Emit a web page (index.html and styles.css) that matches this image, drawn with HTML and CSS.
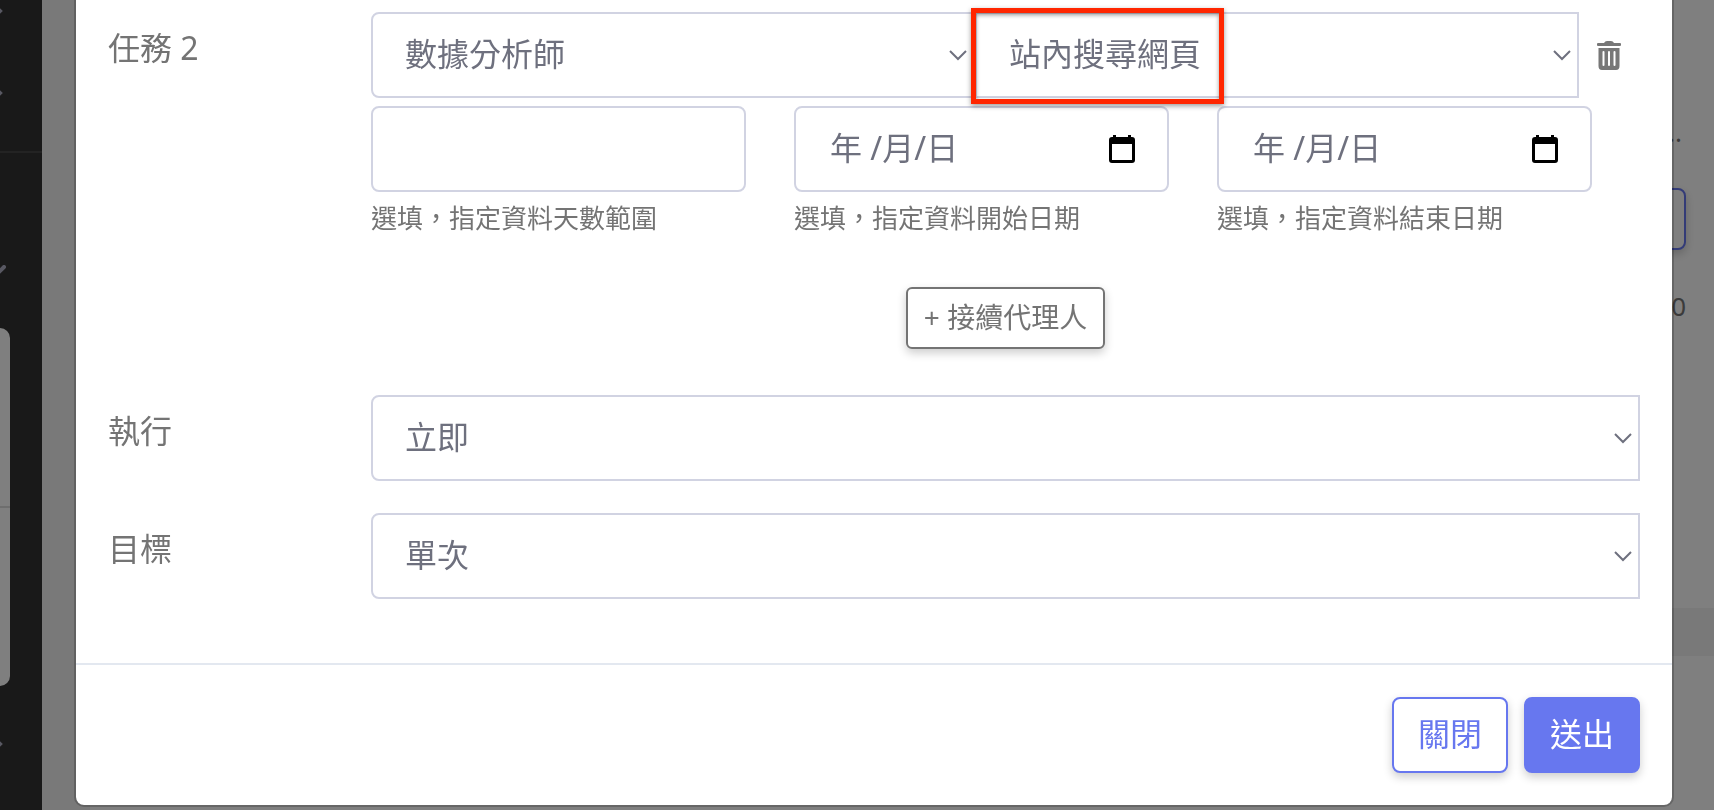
FILE: index.html
```html
<!DOCTYPE html>
<html lang="zh-Hant">
<head>
    <meta charset="UTF-8">
    <meta name="viewport" content="width=device-width, initial-scale=1.0">
    <title>任務</title>
    <link rel="stylesheet" href="styles.css">
</head>
<body>
    <div class="app">
        <nav class="sidebar">
            <div class="sidebar-links">
                <svg class="caret" viewBox="0 0 8 12"><path d="M-6 0L0 6L-6 12"/></svg>
                <svg class="caret" viewBox="0 0 8 12"><path d="M-6 0L0 6L-6 12"/></svg>
            </div>
            <div class="sidebar-open">
                <svg class="caret" viewBox="0 0 8 12"><path d="M-10 2L-3 9L4 2"/></svg>
            </div>
            <div class="submenu">
                <div class="submenu-group"></div>
            </div>
            <div class="sidebar-more">
                <svg class="caret" viewBox="0 0 8 12"><path d="M-6 0L0 6L-6 12"/></svg>
            </div>
        </nav>
        <main class="content">
            <section class="card">
                <p class="card-text">...</p>
                <button type="button" class="card-btn" aria-label="more"></button>
                <p class="card-count">0</p>
            </section>
            <section class="card card-next"></section>
        </main>
    </div>

    <div class="backdrop">
        <div class="modal" role="dialog">
            <form id="taskForm">
                <div class="modal-body">
                    <div class="form-row">
                        <label class="row-label" for="agent">任務 2</label>
                        <div class="row-fields">
                            <div class="task-line">
                                <div class="select-group">
                                    <select class="field select" id="agent">
                                        <option>數據分析師</option>
                                    </select>
                                    <div class="marked">
                                        <select class="field select select-square" id="skill" aria-label="技能">
                                            <option>站內搜尋網頁</option>
                                        </select>
                                        <div class="highlight"></div>
                                    </div>
                                </div>
                                <button type="button" class="trash-btn" aria-label="刪除">
                                    <svg viewBox="0 0 24 29" width="24" height="29">
                                        <path fill="#777" fill-rule="evenodd" d="M1 2H7Q8 0 10 0H14Q16 0 17 2H23Q24 2 24 3V4Q24 5 23 5H1Q0 5 0 4V3Q0 2 1 2ZM1.500 7H22.500V25Q22.500 29 19 29H5Q1.500 29 1.500 25ZM5.500 11V24Q5.500 25 6.500 25Q7.500 25 7.500 24V11Q7.500 10 6.500 10Q5.500 10 5.500 11ZM11 11V24Q11 25 12 25Q13 25 13 24V11Q13 10 12 10Q11 10 11 11ZM16.500 11V24Q16.500 25 17.500 25Q18.500 25 18.500 24V11Q18.500 10 17.500 10Q16.500 10 16.500 11Z"/>
                                    </svg>
                                </button>
                            </div>
                            <div class="range-line">
                                <div>
                                    <input class="field" type="text" id="days">
                                    <label class="help" for="days">選填，指定資料天數範圍</label>
                                </div>
                                <div>
                                    <div class="field date-field">
                                        <input type="text" id="startDate" placeholder="年 /月/日">
                                        <button type="button" class="date-btn" aria-label="選擇日期">
                                            <svg viewBox="0 0 26 28" width="26" height="28"><path fill-rule="evenodd" d="M4 0H7V2H19V0H22V2H23Q26 2 26 5V25Q26 28 23 28H3Q0 28 0 25V5Q0 2 3 2H4ZM3 9V25H23V9Z"/></svg>
                                        </button>
                                    </div>
                                    <label class="help" for="startDate">選填，指定資料開始日期</label>
                                </div>
                                <div>
                                    <div class="field date-field">
                                        <input type="text" id="endDate" placeholder="年 /月/日">
                                        <button type="button" class="date-btn" aria-label="選擇日期">
                                            <svg viewBox="0 0 26 28" width="26" height="28"><path fill-rule="evenodd" d="M4 0H7V2H19V0H22V2H23Q26 2 26 5V25Q26 28 23 28H3Q0 28 0 25V5Q0 2 3 2H4ZM3 9V25H23V9Z"/></svg>
                                        </button>
                                    </div>
                                    <label class="help" for="endDate">選填，指定資料結束日期</label>
                                </div>
                            </div>
                            <div class="add-line">
                                <button type="button" class="btn btn-add">+ 接續代理人</button>
                            </div>
                        </div>
                    </div>

                    <div class="form-row">
                        <label class="row-label" for="run">執行</label>
                        <select class="field select" id="run">
                            <option>立即</option>
                        </select>
                    </div>

                    <div class="form-row">
                        <label class="row-label" for="target">目標</label>
                        <select class="field select" id="target">
                            <option>單次</option>
                        </select>
                    </div>
                </div>

                <div class="modal-footer">
                    <button type="button" class="btn btn-outline">關閉</button>
                    <button type="submit" class="btn btn-primary">送出</button>
                </div>
            </form>
        </div>
    </div>
</body>
</html>
```

FILE: styles.css
```css
* {
    margin: 0;
    padding: 0;
    box-sizing: border-box;
}

body {
    font-family: 'Noto Sans', 'Noto Sans CJK TC', sans-serif;
    color: #747474;
    background: #f2f2f2;
    height: 100vh;
    overflow: hidden;
}

button,
input,
select {
    font-family: inherit;
}

/* page behind the modal */
.app {
    display: flex;
    height: 100vh;
}

.sidebar {
    width: 42px;
    flex: none;
    background: #323232;
}

.caret {
    display: block;
    width: 8px;
    height: 12px;
    fill: none;
    stroke: #b0b0c4;
    stroke-width: 4;
    stroke-linecap: round;
}

.sidebar-links {
    display: flex;
    flex-direction: column;
    gap: 70px;
    height: 153px;
    padding-top: 5px;
    border-bottom: 2px solid #464646;
}

.sidebar-open {
    height: 175px;
    padding-top: 112px;
}

.submenu {
    width: 10px;
    height: 358px;
    background: #fff;
    border-radius: 0 10px 10px 0;
}

.submenu-group {
    height: 180px;
    border-bottom: 2px solid #ddd;
}

.sidebar-more {
    padding-top: 52px;
}

.content {
    flex: 1;
    display: flex;
    flex-direction: column;
    gap: 48px;
    padding-left: 48px;
}

.card {
    flex: none;
    display: flex;
    flex-direction: column;
    align-items: flex-end;
    height: 608px;
    padding: 114px 28px 0 0;
    background: #fff;
}

.card-next {
    flex: 1;
    height: auto;
}

.card-text,
.card-count {
    font-size: 26px;
    line-height: 36px;
    color: #777;
}

.card-text {
    padding-right: 4px;
}

.card-btn {
    width: 120px;
    height: 62px;
    margin: 38px 0;
    background: #fff;
    border: 2px solid #6777ef;
    border-radius: 8px;
    box-shadow: 0 4px 10px rgba(0, 0, 0, 0.2);
}

/* modal */
.backdrop {
    position: fixed;
    inset: 0;
    padding: 0 40px 0 74px;
    background: rgba(0, 0, 0, 0.5);
}

.modal {
    background: #fff;
    background-clip: padding-box;
    border: 2px solid rgba(0, 0, 0, 0.2);
    border-top: none;
    border-radius: 0 0 10px 10px;
}

.modal-body {
    padding: 12px 32px 64px;
}

.form-row {
    display: grid;
    grid-template-columns: 263px minmax(0, 1fr);
    align-items: start;
    margin-bottom: 32px;
}

.form-row:first-child,
.form-row:last-child {
    margin-bottom: 0;
}

.row-label {
    padding-top: 12px;
    font-size: 32px;
    line-height: 48px;
}

.field {
    display: block;
    width: 100%;
    height: 86px;
    padding: 0 32px;
    background: #fff;
    border: 2px solid #d1d3e2;
    border-radius: 8px;
    color: #6e707e;
    font-size: 32px;
}

.select {
    appearance: none;
    padding-bottom: 4px;
    border-radius: 8px 0 0 8px;
    background: #fff url("data:image/svg+xml,%3Csvg xmlns='http://www.w3.org/2000/svg' width='18' height='12' fill='none' stroke='%236e707e' stroke-width='2'%3E%3Cpath d='M1 2L9 10L17 2'/%3E%3C/svg%3E") no-repeat right 6px center;
}

.select-square {
    border-radius: 0;
}

.task-line {
    display: flex;
    align-items: center;
    margin-bottom: 8px;
}

.select-group {
    flex: 1;
    display: grid;
    grid-template-columns: 1fr 1fr;
}

.marked {
    position: relative;
}

.highlight {
    position: absolute;
    top: -4px;
    left: -4px;
    width: 253px;
    height: 96px;
    border: 5px solid #ff2600;
    box-shadow: 0 2px 5px rgba(0, 0, 0, 0.4), inset 0 2px 4px rgba(0, 0, 0, 0.4);
    pointer-events: none;
}

.trash-btn {
    width: 61px;
    height: 40px;
    padding: 0 18px;
    background: none;
    border: none;
    cursor: pointer;
}

.trash-btn svg {
    display: block;
}

.range-line {
    display: grid;
    grid-template-columns: repeat(3, minmax(0, 1fr));
    gap: 48px;
    padding-right: 48px;
}

.date-field {
    display: flex;
    align-items: center;
    padding-left: 34px;
}

.date-field input {
    flex: 1;
    min-width: 0;
    height: 76px;
    padding-bottom: 4px;
    background: none;
    border: none;
    outline: none;
    color: #6e707e;
    font-size: 32px;
}

.date-field input::placeholder {
    color: #6e707e;
}

.date-btn {
    background: none;
    border: none;
    cursor: pointer;
}

.date-btn svg {
    display: block;
}

.help {
    display: block;
    margin-top: 8px;
    font-size: 26px;
    line-height: 36px;
    white-space: nowrap;
}

.add-line {
    display: flex;
    justify-content: center;
    margin: 51px 0 46px;
}

.btn {
    height: 76px;
    padding: 0 24px 6px;
    border: 2px solid #6777ef;
    border-radius: 8px;
    font-size: 32px;
    box-shadow: 0 4px 10px rgba(0, 0, 0, 0.2);
    cursor: pointer;
}

.btn-add {
    height: 62px;
    padding: 0 16px 4px;
    background: #fff;
    border-color: #747474;
    border-radius: 6px;
    color: #747474;
    font-size: 28px;
}

.btn-outline {
    background: #fff;
    color: #6777ef;
}

.btn-primary {
    background: #6777ef;
    color: #fff;
}

.modal-footer {
    display: flex;
    justify-content: flex-end;
    gap: 16px;
    padding: 32px;
    border-top: 2px solid #e3e8f0;
}
```
